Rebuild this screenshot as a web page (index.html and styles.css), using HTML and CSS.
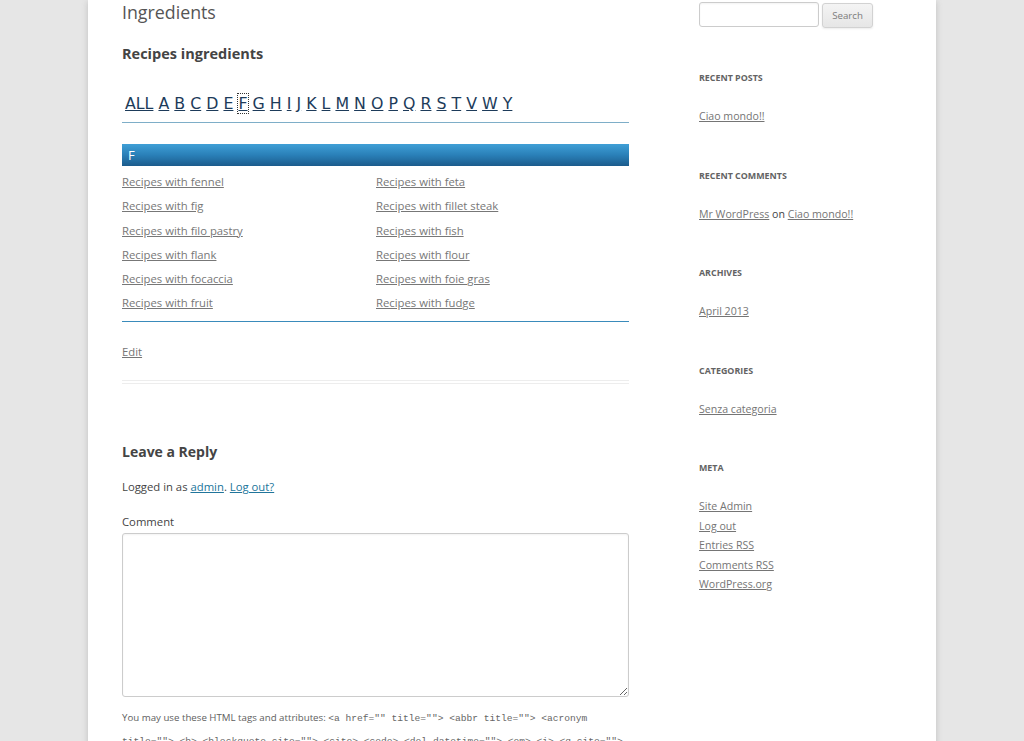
FILE: index.html
```html
<!DOCTYPE html>
<html lang="en">
<head>
    <meta charset="UTF-8">
    <meta name="viewport" content="width=device-width, initial-scale=1.0">
    <title>Ingredients</title>
    <link rel="stylesheet" href="styles.css">
</head>
<body>
    <div id="page" class="site">
        <div id="main" class="wrapper">
            <div id="primary" class="site-content">
                <article class="page">
                    <h1 class="entry-title">Ingredients</h1>
                    <div class="entry-content">
                        <h2 class="index-title">Recipes ingredients</h2>
                        <div class="az-letters">
                            <a href="#">ALL</a> <a href="#">A</a> <a href="#">B</a> <a href="#">C</a> <a href="#">D</a> <a href="#">E</a> <a href="#" class="current">F</a> <a href="#">G</a> <a href="#">H</a> <a href="#">I</a> <a href="#">J</a> <a href="#">K</a> <a href="#">L</a> <a href="#">M</a> <a href="#">N</a> <a href="#">O</a> <a href="#">P</a> <a href="#">Q</a> <a href="#">R</a> <a href="#">S</a> <a href="#">T</a> <a href="#">V</a> <a href="#">W</a> <a href="#">Y</a>
                        </div>
                        <div class="az-group">
                            <div class="az-heading">F</div>
                            <ul class="az-items">
                                <li><a href="#">Recipes with fennel</a></li>
                                <li><a href="#">Recipes with feta</a></li>
                                <li><a href="#">Recipes with fig</a></li>
                                <li><a href="#">Recipes with fillet steak</a></li>
                                <li><a href="#">Recipes with filo pastry</a></li>
                                <li><a href="#">Recipes with fish</a></li>
                                <li><a href="#">Recipes with flank</a></li>
                                <li><a href="#">Recipes with flour</a></li>
                                <li><a href="#">Recipes with focaccia</a></li>
                                <li><a href="#">Recipes with foie gras</a></li>
                                <li><a href="#">Recipes with fruit</a></li>
                                <li><a href="#">Recipes with fudge</a></li>
                            </ul>
                        </div>
                    </div>
                    <footer class="entry-meta">
                        <a href="#" class="edit-link">Edit</a>
                    </footer>
                </article>

                <div id="respond" class="comment-respond">
                    <h3 id="reply-title">Leave a Reply</h3>
                    <form class="comment-form">
                        <p class="logged-in-as">Logged in as <a href="#">admin</a>. <a href="#">Log out?</a></p>
                        <p class="comment-form-comment">
                            <label for="comment">Comment</label>
                            <textarea id="comment" name="comment"></textarea>
                        </p>
                        <p class="form-allowed-tags">You may use these HTML tags and attributes: <code>&lt;a href="" title=""&gt; &lt;abbr title=""&gt; &lt;acronym title=""&gt; &lt;b&gt; &lt;blockquote cite=""&gt; &lt;cite&gt; &lt;code&gt; &lt;del datetime=""&gt; &lt;em&gt; &lt;i&gt; &lt;q cite=""&gt; &lt;strike&gt; &lt;strong&gt;</code></p>
                    </form>
                </div>
            </div>

            <div id="secondary" class="widget-area">
                <form class="searchform">
                    <input type="text" class="search-field">
                    <button type="button" class="search-submit">Search</button>
                </form>

                <aside class="widget">
                    <h3 class="widget-title">Recent Posts</h3>
                    <ul>
                        <li><a href="#">Ciao mondo!!</a></li>
                    </ul>
                </aside>
                <aside class="widget">
                    <h3 class="widget-title">Recent Comments</h3>
                    <ul>
                        <li><a href="#">Mr WordPress</a> on <a href="#">Ciao mondo!!</a></li>
                    </ul>
                </aside>
                <aside class="widget">
                    <h3 class="widget-title">Archives</h3>
                    <ul>
                        <li><a href="#">April 2013</a></li>
                    </ul>
                </aside>
                <aside class="widget">
                    <h3 class="widget-title">Categories</h3>
                    <ul>
                        <li><a href="#">Senza categoria</a></li>
                    </ul>
                </aside>
                <aside class="widget">
                    <h3 class="widget-title">Meta</h3>
                    <ul>
                        <li><a href="#">Site Admin</a></li>
                        <li><a href="#">Log out</a></li>
                        <li><a href="#">Entries RSS</a></li>
                        <li><a href="#">Comments RSS</a></li>
                        <li><a href="#">WordPress.org</a></li>
                    </ul>
                </aside>
            </div>
        </div>
    </div>
</body>
</html>
```

FILE: styles.css
```css
html,
body {
    margin: 0;
    padding: 0;
}

body {
    background-color: #e6e6e6;
    font-family: "Open Sans", Helvetica, Arial, sans-serif;
    color: #444;
    font-size: 11.3px;
    overflow: hidden;
}

a {
    color: #757575;
}

ul {
    list-style: none;
    margin: 0;
    padding: 0;
}

p {
    margin: 0;
}

.site {
    width: 780px;
    min-height: 741px;
    margin: 0 auto;
    padding: 0 34px;
    background-color: #fff;
    box-shadow: 0 2px 6px rgba(100, 100, 100, 0.3);
}

.wrapper {
    display: flex;
}

.site-content {
    width: 507px;
    flex-shrink: 0;
}

.widget-area {
    width: 203px;
    margin-left: 70px;
    padding-top: 2px;
}

/* page article */

.entry-title {
    margin: 0;
    font-size: 17.8px;
    font-weight: normal;
    line-height: 24px;
    color: #555;
}

.index-title {
    margin: 20px 0 0;
    font-size: 14.5px;
    font-weight: bold;
    line-height: 20px;
    color: #444;
}

.az-letters {
    margin-top: 29px;
    padding: 0 0 7px 3px;
    border-bottom: 1px solid #7eaec8;
    font-family: "DejaVu Sans", Verdana, sans-serif;
    font-size: 15.8px;
    line-height: 22px;
    white-space: nowrap;
}

.az-letters a {
    color: #1d3b5a;
}

.az-letters a.current {
    outline: 1px dotted #333;
    outline-offset: 0;
}

.az-group {
    margin-top: 21px;
    padding-bottom: 5px;
    border-bottom: 1px solid #3a8bbb;
}

.az-heading {
    height: 22px;
    padding-left: 6px;
    background: linear-gradient(to bottom, #3f9fd6 0%, #2a80b8 50%, #1b5b8c 100%);
    color: #fff;
    font-size: 13px;
    line-height: 22px;
}

.az-items {
    display: grid;
    grid-template-columns: 254px 1fr;
    margin-top: 4px;
}

.az-items li {
    line-height: 24.3px;
}

.az-items a {
    color: #777;
}

.entry-meta {
    margin-top: 20px;
    padding-bottom: 18px;
    border-bottom: 4px double #ededed;
    line-height: 20px;
}

/* comment form */

#reply-title {
    margin: 58px 0 0;
    font-size: 14px;
    font-weight: bold;
    line-height: 20px;
    color: #444;
}

.logged-in-as {
    margin-top: 15px;
    line-height: 20px;
}

.logged-in-as a {
    color: #21759b;
}

.comment-form-comment {
    margin-top: 15px;
}

.comment-form-comment label {
    display: block;
    line-height: 20px;
    margin-bottom: 1px;
}

.comment-form-comment textarea {
    display: block;
    box-sizing: border-box;
    width: 507px;
    height: 164px;
    margin: 0;
    border: 1px solid #ccc;
    border-radius: 3px;
    box-shadow: inset 0 1px 2px rgba(0, 0, 0, 0.05);
    font-family: inherit;
}

.form-allowed-tags {
    margin-top: 10px;
    font-size: 9.7px;
    line-height: 22px;
    color: #5e5e5e;
}

.form-allowed-tags code {
    font-family: "Liberation Mono", "Courier New", monospace;
    font-size: 9.6px;
    color: #666;
}

/* sidebar */

.searchform {
    display: flex;
    align-items: flex-start;
    height: 26px;
}

.search-field {
    box-sizing: border-box;
    width: 120px;
    height: 25px;
    margin: 0;
    border: 1px solid #ccc;
    border-radius: 3px;
    box-shadow: inset 0 1px 2px rgba(0, 0, 0, 0.05);
}

.search-submit {
    box-sizing: border-box;
    width: 51px;
    height: 25px;
    margin: 1px 0 0 3px;
    padding: 0;
    border: 1px solid #d2d2d2;
    border-radius: 3px;
    background: linear-gradient(to bottom, #f4f4f4, #e6e6e6);
    box-shadow: 0 1px 2px rgba(64, 64, 64, 0.1);
    color: #7c7c7c;
    font-family: "Open Sans", Helvetica, Arial, sans-serif;
    font-size: 9.7px;
}

.widget {
    margin-bottom: 38.75px;
    font-size: 10.6px;
}

.searchform + .widget {
    margin-top: 40px;
}

.widget-title {
    margin: 0 0 19.25px;
    font-size: 8.9px;
    font-weight: bold;
    line-height: 20px;
    text-transform: uppercase;
    color: #636363;
}

.widget li {
    line-height: 19.5px;
}
```
